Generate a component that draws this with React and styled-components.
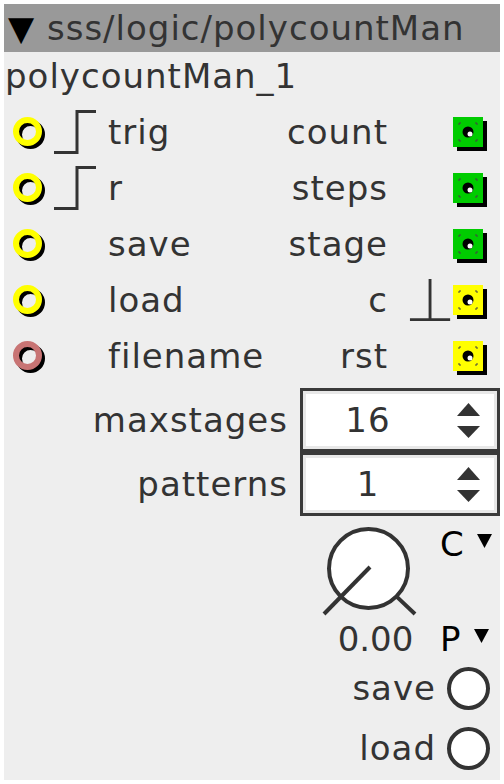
import React from "react";
import styled, { createGlobalStyle } from "styled-components";

const GlobalStyle = createGlobalStyle`
  body {
    margin: 4px;
    background: #ffffff;
    font-family: "DejaVu Sans", "Liberation Sans", sans-serif;
  }
`;

const Panel = styled.div`
  height: 776px;
  background: #eeeeee;
  color: #333333;
  font-size: 34px;
  letter-spacing: 1px;
  display: flex;
  flex-direction: column;
  overflow: hidden;
`;

const Header = styled.div`
  height: 48px;
  line-height: 48px;
  background: #999999;
  padding-left: 4px;
  white-space: nowrap;

  span {
    color: #000000;
  }
`;

const Title = styled.div`
  height: 48px;
  line-height: 48px;
  padding-left: 1px;
  margin-bottom: 4px;
`;

const Row = styled.div`
  height: 56px;
  line-height: 56px;
  display: grid;
  grid-template-columns: 48px 56px 1fr auto 66px 47px;
  align-items: center;
`;

const Cell = styled.div`
  display: flex;
  align-items: center;
  height: 56px;
`;

const RightLabel = styled.div`
  text-align: right;
  margin-right: -1px;
`;

const InletSvg = styled.svg`
  margin-left: 5px;
`;

const OutletSvg = styled.svg`
  align-self: flex-start;
  margin-top: 13px;
`;

const EdgeSvg = styled.svg`
  margin-left: ${(p) => p.$offset || 0}px;
`;

const Inlet = ({ color }) => (
  <InletSvg width="38" height="38" viewBox="0 0 38 38">
    <circle cx="21.5" cy="21.5" r="11.5" fill="none" stroke="#000" strokeWidth="6" />
    <circle cx="18.5" cy="18.5" r="11.5" fill="none" stroke={color} strokeWidth="6" />
  </InletSvg>
);

const Outlet = ({ color }) => (
  <OutletSvg width="36" height="36" viewBox="0 0 36 36">
    <rect x="4" y="4" width="30" height="30" fill="#000" />
    <rect x="0" y="0" width="30" height="30" fill={color} />
    <g stroke="#444" strokeWidth="1" fill="none">
      <path d="M6 8 V6 H8" />
      <path d="M22 6 H24 V8" />
      <path d="M6 22 V24 H8" />
      <path d="M22 24 H24 V22" />
    </g>
    <circle cx="15" cy="15" r="5.5" fill="#000" />
    <circle cx="17" cy="17" r="2.5" fill="#fff" />
  </OutletSvg>
);

const Rising = () => (
  <EdgeSvg width="46" height="44" viewBox="0 0 46 44">
    <path d="M2 42.5 H25 V1.5 H44" fill="none" stroke="#333" strokeWidth="3" />
  </EdgeSvg>
);

const Impulse = () => (
  <EdgeSvg $offset={22} width="46" height="44" viewBox="0 0 46 44">
    <path d="M1 42.5 H43 M22 0 V42.5" fill="none" stroke="#333" strokeWidth="3" />
  </EdgeSvg>
);

const NumRow = styled.div`
  display: grid;
  grid-template-columns: 1fr 200px;
  align-items: center;
  margin-top: ${(p) => p.$top || 0}px;
`;

const NumLabel = styled.div`
  text-align: right;
  padding-right: 12px;
`;

const NumBox = styled.div`
  height: 64px;
  box-sizing: border-box;
  border: 3px solid #3a3a3a;
  background: #e8e8e8;
  padding: 3px;
  display: flex;
`;

const NumField = styled.div`
  flex: 1;
  background: #ffffff;
  display: flex;
  align-items: center;
`;

const NumValue = styled.div`
  flex: 1;
  text-align: center;
  padding-left: 2px;
`;

const Spinner = styled.div`
  width: 66px;
  display: flex;
  justify-content: flex-end;
  padding-right: 14px;
  box-sizing: border-box;
`;

const SpinArrows = () => (
  <svg width="23" height="36" viewBox="0 0 23 36">
    <polygon points="0,14 11.5,1 23,14" fill="#333" />
    <polygon points="0,24 23,24 11.5,36" fill="#333" />
  </svg>
);

const KnobRow = styled.div`
  height: 142px;
  display: flex;
  justify-content: flex-end;
`;

const KnobCol = styled.div`
  width: 100px;
  margin-right: 20px;
  display: flex;
  flex-direction: column;
  padding-top: 6px;
`;

const KnobValue = styled.div`
  height: 38px;
  line-height: 38px;
  letter-spacing: 0;
  text-align: center;
  padding-left: 11px;
  white-space: nowrap;
`;

const MenuCol = styled.div`
  width: 60px;
  display: flex;
  flex-direction: column;
  justify-content: space-between;
`;

const Menu = styled.div`
  height: ${(p) => p.$h}px;
  line-height: ${(p) => p.$h}px;
  color: #000000;
  display: flex;
  align-items: center;
  gap: 12px;

  svg {
    margin-bottom: 6px;
  }
`;

const Knob = () => (
  <svg width="100" height="98" viewBox="0 0 100 98">
    <circle cx="48.5" cy="46.5" r="39.5" fill="#fff" stroke="#333" strokeWidth="4" />
    <line x1="50" y1="45" x2="4" y2="92" stroke="#333" strokeWidth="4" />
    <line x1="76.4" y1="74.4" x2="95" y2="92" stroke="#333" strokeWidth="4" />
  </svg>
);

const Caret = () => (
  <svg width="15" height="14" viewBox="0 0 15 14">
    <polygon points="0,0 15,0 7.5,14" fill="#000" />
  </svg>
);

const ButtonRow = styled.div`
  height: 60px;
  display: flex;
  justify-content: flex-end;
  align-items: center;
  gap: 11px;
  padding-right: 10px;
`;

const Bang = styled.div`
  width: 43px;
  height: 43px;
  box-sizing: border-box;
  border: 4px solid #333;
  border-radius: 50%;
  background: #ffffff;
`;

const ports = [
  { inlet: "trig", inColor: "#ffff00", rising: true, outlet: "count", outColor: "#00cc00" },
  { inlet: "r", inColor: "#ffff00", rising: true, outlet: "steps", outColor: "#00cc00" },
  { inlet: "save", inColor: "#ffff00", outlet: "stage", outColor: "#00cc00" },
  { inlet: "load", inColor: "#ffff00", outlet: "c", outColor: "#ffff00", impulse: true },
  { inlet: "filename", inColor: "#c87474", outlet: "rst", outColor: "#ffff00" },
];

export default function App() {
  return (
    <>
      <GlobalStyle />
      <Panel>
        <Header>
          <span>▼</span> sss/logic/polycountMan
        </Header>
        <Title>polycountMan_1</Title>
        {ports.map((p) => (
          <Row key={p.inlet}>
            <Cell>
              <Inlet color={p.inColor} />
            </Cell>
            <Cell>{p.rising && <Rising />}</Cell>
            <div>{p.inlet}</div>
            <RightLabel>{p.outlet}</RightLabel>
            <Cell>{p.impulse && <Impulse />}</Cell>
            <Cell>
              <Outlet color={p.outColor} />
            </Cell>
          </Row>
        ))}
        <NumRow $top={4}>
          <NumLabel>maxstages</NumLabel>
          <NumBox>
            <NumField>
              <NumValue>16</NumValue>
              <Spinner>
                <SpinArrows />
              </Spinner>
            </NumField>
          </NumBox>
        </NumRow>
        <NumRow>
          <NumLabel>patterns</NumLabel>
          <NumBox>
            <NumField>
              <NumValue>1</NumValue>
              <Spinner>
                <SpinArrows />
              </Spinner>
            </NumField>
          </NumBox>
        </NumRow>
        <KnobRow>
          <KnobCol>
            <Knob />
            <KnobValue>0.00</KnobValue>
          </KnobCol>
          <MenuCol>
            <Menu $h={56}>
              C <Caret />
            </Menu>
            <Menu $h={38}>
              P <Caret />
            </Menu>
          </MenuCol>
        </KnobRow>
        <ButtonRow>
          save <Bang />
        </ButtonRow>
        <ButtonRow>
          load <Bang />
        </ButtonRow>
      </Panel>
    </>
  );
}
